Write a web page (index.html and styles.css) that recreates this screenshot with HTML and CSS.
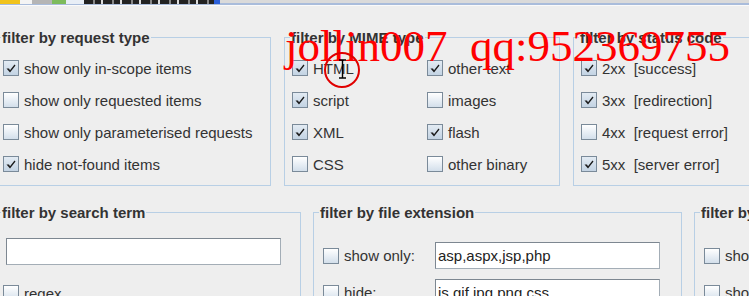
FILE: index.html
```html
<!DOCTYPE html>
<html lang="en">
<head>
  <meta charset="UTF-8">
  <title>Filter</title>
  <link rel="stylesheet" href="styles.css">
</head>
<body>

  <div class="topbar">
    <div class="tools">
      <span class="t-yellow"></span>
      <span class="t-white"></span>
      <span class="t-gray"></span>
      <span class="t-green"></span>
      <span class="t-light"></span>
      <span class="t-dark"></span>
      <span class="t-blue"></span>
    </div>
  </div>

  <div class="page">
    <div class="row row-top">
      <fieldset class="group g-type">
        <legend>filter by request type</legend>
        <div class="list">
          <div class="opt"><span class="cb on"><svg viewBox="0 0 14 14"><path d="M2.5 7.5 L5 7.5 L6 9.2 L10.5 3.5 L11.5 4.5 L6 11.5 Z"/></svg></span>show only in-scope items</div>
          <div class="opt"><span class="cb"></span>show only requested items</div>
          <div class="opt"><span class="cb"></span>show only parameterised requests</div>
          <div class="opt"><span class="cb on"><svg viewBox="0 0 14 14"><path d="M2.5 7.5 L5 7.5 L6 9.2 L10.5 3.5 L11.5 4.5 L6 11.5 Z"/></svg></span>hide not-found items</div>
        </div>
      </fieldset>

      <fieldset class="group g-mime">
        <legend>filter by MIME type</legend>
        <div class="grid">
          <div class="opt"><span class="cb on"><svg viewBox="0 0 14 14"><path d="M2.5 7.5 L5 7.5 L6 9.2 L10.5 3.5 L11.5 4.5 L6 11.5 Z"/></svg></span>HTML</div>
          <div class="opt"><span class="cb on"><svg viewBox="0 0 14 14"><path d="M2.5 7.5 L5 7.5 L6 9.2 L10.5 3.5 L11.5 4.5 L6 11.5 Z"/></svg></span>other text</div>
          <div class="opt"><span class="cb on"><svg viewBox="0 0 14 14"><path d="M2.5 7.5 L5 7.5 L6 9.2 L10.5 3.5 L11.5 4.5 L6 11.5 Z"/></svg></span>script</div>
          <div class="opt"><span class="cb"></span>images</div>
          <div class="opt"><span class="cb on"><svg viewBox="0 0 14 14"><path d="M2.5 7.5 L5 7.5 L6 9.2 L10.5 3.5 L11.5 4.5 L6 11.5 Z"/></svg></span>XML</div>
          <div class="opt"><span class="cb on"><svg viewBox="0 0 14 14"><path d="M2.5 7.5 L5 7.5 L6 9.2 L10.5 3.5 L11.5 4.5 L6 11.5 Z"/></svg></span>flash</div>
          <div class="opt"><span class="cb"></span>CSS</div>
          <div class="opt"><span class="cb"></span>other binary</div>
        </div>
      </fieldset>

      <fieldset class="group g-status">
        <legend>filter by status code</legend>
        <div class="list">
          <div class="opt"><span class="cb on"><svg viewBox="0 0 14 14"><path d="M2.5 7.5 L5 7.5 L6 9.2 L10.5 3.5 L11.5 4.5 L6 11.5 Z"/></svg></span><span class="pre">2xx  [success]</span></div>
          <div class="opt"><span class="cb on"><svg viewBox="0 0 14 14"><path d="M2.5 7.5 L5 7.5 L6 9.2 L10.5 3.5 L11.5 4.5 L6 11.5 Z"/></svg></span><span class="pre">3xx  [redirection]</span></div>
          <div class="opt"><span class="cb"></span><span class="pre">4xx  [request error]</span></div>
          <div class="opt"><span class="cb on"><svg viewBox="0 0 14 14"><path d="M2.5 7.5 L5 7.5 L6 9.2 L10.5 3.5 L11.5 4.5 L6 11.5 Z"/></svg></span><span class="pre">5xx  [server error]</span></div>
        </div>
      </fieldset>
    </div>

    <div class="row row-bottom">
      <fieldset class="group g-search">
        <legend>filter by search term</legend>
        <div class="search-body">
          <div class="field wide"></div>
          <div class="opt regex"><span class="cb"></span>regex</div>
        </div>
      </fieldset>

      <fieldset class="group g-ext">
        <legend>filter by file extension</legend>
        <div class="ext-grid">
          <div class="opt"><span class="cb"></span>show only:</div>
          <div class="field">asp,aspx,jsp,php</div>
          <div class="opt"><span class="cb"></span>hide:</div>
          <div class="field">js,gif,jpg,png,css</div>
        </div>
      </fieldset>

      <fieldset class="group g-note">
        <legend>filter by annotation</legend>
        <div class="ext-grid">
          <div class="opt"><span class="cb"></span>show only commented items</div>
          <div class="opt"><span class="cb"></span>show only highlighted items</div>
        </div>
      </fieldset>
    </div>
  </div>

  <!-- screenshot watermark and mouse mark -->
  <div class="watermark">jollin007  qq:952369755</div>
  <div class="ring"></div>
  <svg class="ibeam" viewBox="0 0 9 20"><path d="M1 1 H8 M4.5 1 V19 M1 19 H8" fill="none" stroke="#000" stroke-width="1.4"/></svg>

</body>
</html>
```

FILE: styles.css
```css
* {
  box-sizing: border-box;
}
body {
  margin: 0;
  background: #eeeeee;
  font-family: "Liberation Sans", Arial, sans-serif;
  font-size: 15px;
  color: #333333;
  overflow: hidden;
  height: 296px;
}

/* cut-off window strip at the top */
.topbar {
  height: 6px;
  background: linear-gradient(#dadada 0, #dadada 3px, #a9bcdb 3px, #a9bcdb 5px, #fafafa 5px);
}
.tools {
  display: flex;
  height: 4px;
  width: 220px;
}
.tools span {
  display: block;
  height: 4px;
}
.t-yellow { width: 20px; background: #f1c31c; }
.t-white { width: 12px; background: #f4f4f4; }
.t-gray { width: 20px; background: #b5b5b5; }
.t-green { width: 14px; background: #7dbb5c; }
.t-light { width: 18px; background: #e8eef6; }
.t-dark { width: 130px; background: repeating-linear-gradient(90deg, #222 0 9px, #888 9px 11px, #222 11px 17px, #ddd 17px 19px); }
.t-blue { width: 6px; background: #2b5fd9; }

.page {
  margin-left: -5px;
}
.row {
  display: flex;
  gap: 13px;
}
.row-top {
  margin-top: 23px;
}
.row-bottom {
  margin-top: 18px;
  gap: 12px;
}

.group {
  flex-shrink: 0;
  margin: 0;
  padding: 6px 0 5px 0;
  border: 1px solid #b8cfe5;
  min-width: 0;
}
.group legend {
  margin-left: 5px;
  padding: 0 1px;
  font-weight: bold;
  line-height: 17px;
  color: #333333;
}
.g-type, .g-mime {
  width: 276px;
}
.g-status {
  width: 300px;
}

.opt {
  display: flex;
  align-items: center;
  gap: 5px;
  height: 32px;
  padding-left: 7px;
  white-space: nowrap;
}
.pre {
  white-space: pre;
}
.cb {
  flex-shrink: 0;
  display: flex;
  align-items: center;
  justify-content: center;
  width: 16px;
  height: 16px;
  border: 1px solid #7a8a99;
  background: linear-gradient(#ffffff, #d3dfeb);
}
.cb.on {
  background: linear-gradient(#e3ebf3, #c3d3e3);
}
.cb svg {
  width: 14px;
  height: 14px;
  fill: #1a1a1a;
}

.grid {
  display: grid;
  grid-template-columns: 135px auto;
}

.g-search {
  width: 306px;
  height: 120px;
}
.search-body {
  padding: 11px 0 0 10px;
}
.field {
  height: 27px;
  background: #ffffff;
  border: 1px solid #a3adb6;
  border-top-color: #7d8791;
  border-left-color: #7d8791;
  padding: 0 2px;
  line-height: 25px;
  color: #222222;
  white-space: nowrap;
  overflow: hidden;
}
.field.wide {
  width: 275px;
}
.regex {
  margin-top: 12px;
  margin-left: -10px;
}

.g-ext {
  width: 369px;
  height: 120px;
}
.ext-grid {
  display: grid;
  grid-template-columns: 119px 225px;
  row-gap: 10px;
  padding: 15px 0 0 2px;
}
.ext-grid .opt {
  height: 27px;
}
.g-note {
  width: 260px;
  height: 120px;
}
.g-note .ext-grid {
  grid-template-columns: auto;
}

.watermark {
  position: absolute;
  left: 285px;
  top: 24px;
  font-family: "Liberation Serif", "Times New Roman", serif;
  font-size: 45px;
  line-height: 45px;
  color: #ff0000;
  white-space: pre;
}
.ring {
  position: absolute;
  left: 324px;
  top: 52px;
  width: 36px;
  height: 36px;
  border: 2px solid #e00000;
  border-radius: 50%;
}
.ibeam {
  position: absolute;
  left: 338px;
  top: 59px;
  width: 9px;
  height: 20px;
}
```
